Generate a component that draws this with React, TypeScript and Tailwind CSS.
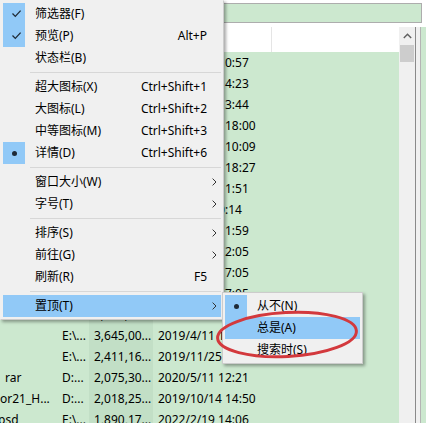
import React from 'react';

type MenuEntry =
  | { sep: true }
  | { sep?: false; label: string; shortcut?: string; sub?: boolean; mark?: 'check' | 'dot'; active?: boolean };

const mainMenu: MenuEntry[] = [
  { label: '筛选器(F)', mark: 'check' },
  { label: '预览(P)', shortcut: 'Alt+P', mark: 'check' },
  { label: '状态栏(B)' },
  { sep: true },
  { label: '超大图标(X)', shortcut: 'Ctrl+Shift+1' },
  { label: '大图标(L)', shortcut: 'Ctrl+Shift+2' },
  { label: '中等图标(M)', shortcut: 'Ctrl+Shift+3' },
  { label: '详情(D)', shortcut: 'Ctrl+Shift+6', mark: 'dot' },
  { sep: true },
  { label: '窗口大小(W)', sub: true },
  { label: '字号(T)', sub: true },
  { sep: true },
  { label: '排序(S)', sub: true },
  { label: '前往(G)', sub: true },
  { label: '刷新(R)', shortcut: 'F5' },
  { sep: true },
  { label: '置顶(T)', sub: true, active: true },
];

const subMenu: MenuEntry[] = [
  { label: '从不(N)', mark: 'dot' },
  { label: '总是(A)', active: true },
  { label: '搜索时(S)' },
];

// visible list rows (most of them sit under the menu)
const rows = [
  { name: '', indent: 'pl-0', path: 'E:\\...', size: '9,812,44...', date: '2020/5/11 10:57' },
  { name: '', indent: 'pl-0', path: 'E:\\...', size: '8,530,12...', date: '2021/3/18 14:23' },
  { name: '', indent: 'pl-0', path: 'D:...', size: '7,944,01...', date: '2019/8/27 13:44' },
  { name: '', indent: 'pl-0', path: 'E:\\...', size: '7,102,63...', date: '2021/10/12 18:00' },
  { name: '', indent: 'pl-0', path: 'D:...', size: '6,688,20...', date: '2020/11/30 10:09' },
  { name: '', indent: 'pl-0', path: 'E:\\...', size: '6,204,57...', date: '2019/12/16 18:27' },
  { name: '', indent: 'pl-0', path: 'E:\\...', size: '5,870,33...', date: '2020/7/15 11:51' },
  { name: '', indent: 'pl-0', path: 'D:...', size: '5,411,09...', date: '2022/1/6 10:14' },
  { name: '', indent: 'pl-0', path: 'E:\\...', size: '4,996,72...', date: '2021/4/22 11:59' },
  { name: '', indent: 'pl-0', path: 'E:\\...', size: '4,705,18...', date: '2020/6/19 12:05' },
  { name: '', indent: 'pl-0', path: 'D:...', size: '4,388,50...', date: '2019/7/24 17:05' },
  { name: '', indent: 'pl-0', path: 'E:\\...', size: '4,102,36...', date: '2022/3/10 17:05' },
  { name: '', indent: 'pl-0', path: 'E:\\...', size: '3,902,77...', date: '2021/5/14 10:31' },
  { name: '', indent: 'pl-0', path: 'E:\\...', size: '3,645,00...', date: '2019/4/11 16:38' },
  { name: '', indent: 'pl-0', path: 'E:\\...', size: '2,411,16...', date: '2019/11/25 9:47' },
  { name: 'rar', indent: 'pl-[5px]', path: 'D:...', size: '2,075,30...', date: '2020/5/11 12:21' },
  { name: 'or21_H...', indent: 'pl-0', path: 'D:...', size: '2,018,25...', date: '2019/10/14 14:50' },
  { name: 'psd', indent: '-ml-[2px]', path: 'E:\\...', size: '1,890,17...', date: '2022/2/19 14:06' },
];

function CheckMark() {
  return (
    <svg width="22" height="22" viewBox="0 0 22 22">
      <path d="M9.5 10.5 L12.3 13.4 L17.6 7.6" fill="none" stroke="#1f2a36" strokeWidth="1.3" />
    </svg>
  );
}

function SubArrow() {
  return (
    <svg width="5" height="8" viewBox="0 0 5 8">
      <path d="M0.6 0.6 L4 4 L0.6 7.4" fill="none" stroke="#333" strokeWidth="1" />
    </svg>
  );
}

function MenuRows({ items }: { items: MenuEntry[] }) {
  return (
    <>
      {items.map((it, i) => {
        if (it.sep) {
          return (
            <div key={i} className="h-[7px] pt-[3px] pl-[27px]">
              <div className="h-px bg-[#d7d7d7]" />
            </div>
          );
        }
        return (
          <div
            key={i}
            className={`flex h-[22px] items-center ${it.active ? 'bg-[#91c9f7]' : ''}`}
          >
            <div
              className={`flex h-[22px] w-[22px] shrink-0 items-center justify-center ${
                it.mark ? 'bg-[#91c9f7]' : ''
              }`}
            >
              {it.mark === 'check' && <CheckMark />}
              {it.mark === 'dot' && <span className="h-[5px] w-[5px] rounded-full bg-[#1f2a36]" />}
            </div>
            <span className="flex-1 whitespace-nowrap pl-[10px]">{it.label}</span>
            {it.shortcut && <span className="whitespace-nowrap">{it.shortcut}</span>}
            <div className="flex w-[14px] shrink-0 items-center pl-[5px]">
              {it.sub && <SubArrow />}
            </div>
          </div>
        );
      })}
    </>
  );
}

export default function App() {
  return (
    <div className="relative h-[423px] w-[426px] overflow-hidden bg-white font-['Noto_Sans','Noto_Sans_CJK_SC',sans-serif] text-[12px] leading-[22px] text-black">
      {/* search box */}
      <div className="h-[27px] pt-[3px]">
        <div className="h-[20px] w-[422px] border border-[#adadad] bg-[#cce8cf]" />
      </div>

      <div className="flex h-[396px]">
        {/* file list */}
        <div className="flex w-[416px] border-r border-[#8a8a8a]">
          <div className="w-[399px]">
            <div className="flex h-[25px] items-center bg-white text-[#333]">
              <div className="w-[58px] shrink-0 pl-[4px]">名称</div>
              <div className="w-[31px] shrink-0 overflow-hidden pl-[4px]">路径</div>
              <div className="w-[64px] shrink-0 pl-[5px]">大小</div>
              <div className="h-[25px] w-[119px] shrink-0 border-r border-[#e5e5e5] pl-[5px] leading-[25px]">修改时间</div>
              <div className="flex-1" />
            </div>
            <div className="h-[371px] overflow-hidden bg-[#cce8cf]">
              {rows.map((r, i) => (
                <div key={i} className="flex h-[21px] items-center leading-[21px]">
                  <div className="w-[58px] shrink-0 overflow-hidden whitespace-nowrap">
                    <div className={r.indent}>{r.name || '\u00a0'}</div>
                  </div>
                  <div className="w-[31px] shrink-0 overflow-hidden whitespace-nowrap pl-[4px]">{r.path}</div>
                  <div className="w-[64px] shrink-0 overflow-hidden whitespace-nowrap bg-[#c2dfc6] pl-[5px]">{r.size}</div>
                  <div className="w-[119px] shrink-0 whitespace-nowrap pl-[5px]">{r.date}</div>
                  <div className="flex-1" />
                </div>
              ))}
            </div>
          </div>
          {/* vertical scrollbar */}
          <div className="flex w-[16px] flex-col bg-[#f0f0f0]">
            <div className="flex h-[18px] items-center justify-center">
              <svg width="9" height="6" viewBox="0 0 9 6">
                <path d="M0.8 5 L4.5 1.3 L8.2 5" fill="none" stroke="#606060" strokeWidth="1.4" />
              </svg>
            </div>
            <div className="mx-[1px] h-[17px] bg-[#cdcdcd]" />
          </div>
        </div>
        <div className="w-[4px] bg-[#f0f0f0]" />
        {/* preview pane */}
        <div className="flex-1 border-l border-[#b4b4b4] bg-[#cce8cf]" />
      </div>

      {/* context menu */}
      <div className="absolute left-0 top-0 w-[224px] border border-[#cccccc] border-l-transparent border-t-transparent bg-[#f0f0f0] p-[2px] shadow-[2px_2px_3px_rgba(0,0,0,0.35)]">
        <MenuRows items={mainMenu} />
      </div>

      {/* submenu of 置顶 */}
      <div className="absolute left-[222px] top-[292px] w-[141px] border border-[#cccccc] bg-[#f0f0f0] p-[2px] shadow-[2px_2px_3px_rgba(0,0,0,0.35)]">
        <MenuRows items={subMenu} />
      </div>

      {/* red annotation */}
      <svg className="pointer-events-none absolute left-0 top-0" width="426" height="423" viewBox="0 0 426 423">
        <ellipse cx="287" cy="334.5" rx="69.5" ry="22" transform="rotate(-3 287 334.5)" fill="none" stroke="#d3393d" strokeWidth="3" />
      </svg>
    </div>
  );
}
